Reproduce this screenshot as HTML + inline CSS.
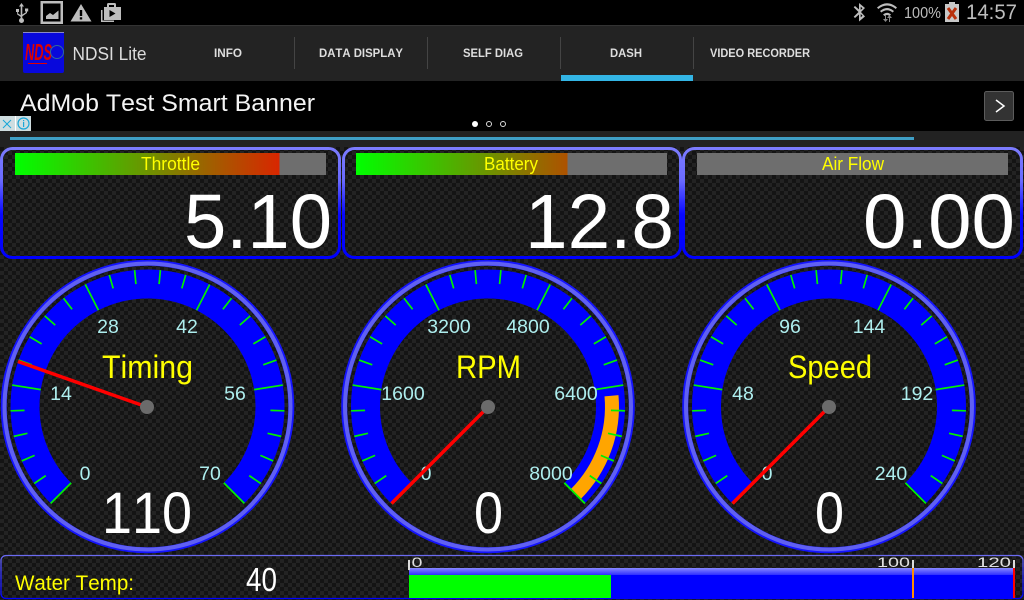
<!DOCTYPE html>
<html><head><meta charset="utf-8"><title>NDSI Lite</title>
<style>
html,body{margin:0;padding:0;background:#000;width:1024px;height:600px;overflow:hidden}
#bg{position:absolute;left:0;top:131px;width:1024px;height:469px;background:conic-gradient(#232323 25%,#141414 0 50%,#232323 0 75%,#141414 0) 0 0/8px 8px}
svg{position:absolute;left:0;top:0;font-family:"Liberation Sans",sans-serif;font-kerning:none}
</style></head><body>
<div id="bg"></div>
<svg width="1024" height="600" viewBox="0 0 1024 600" xmlns="http://www.w3.org/2000/svg">
<defs>
<linearGradient id="pb" gradientUnits="userSpaceOnUse" x1="0" y1="147" x2="0" y2="259"><stop offset="0" stop-color="#7c7cff"/><stop offset=".3" stop-color="#6a6aff"/><stop offset=".6" stop-color="#0808ff"/><stop offset="1" stop-color="#0000ff"/></linearGradient>
<linearGradient id="bb" gradientUnits="userSpaceOnUse" x1="0" y1="555" x2="0" y2="599"><stop offset="0" stop-color="#6c6cf0"/><stop offset=".5" stop-color="#2a2aff"/><stop offset="1" stop-color="#0000ff"/></linearGradient>
<linearGradient id="st" gradientUnits="userSpaceOnUse" x1="0" y1="568" x2="0" y2="576"><stop offset="0" stop-color="#8888ff"/><stop offset="1" stop-color="#2222ff"/></linearGradient>
<linearGradient id="g1" gradientUnits="userSpaceOnUse" x1="15" y1="0" x2="326" y2="0"><stop offset="0" stop-color="#00ff00"/><stop offset="1" stop-color="#ff0000"/></linearGradient>
<linearGradient id="g2" gradientUnits="userSpaceOnUse" x1="356" y1="0" x2="667" y2="0"><stop offset="0" stop-color="#00ff00"/><stop offset="1" stop-color="#ff0000"/></linearGradient>
<g id="dial">
<circle r="143.800" fill="none" stroke="#1414ff" stroke-width="6"/>
<circle r="143" fill="none" stroke="#6060f2" stroke-width="4"/>
<path d="M-86.62 86.62A122.5 122.5 0 1 1 86.62 86.62" fill="none" stroke="#0000ff" stroke-width="29"/>
<g stroke="#00f000" stroke-width="1.700">
<line y1="-137" y2="-108" transform="rotate(-135)"/>
<line y1="-137" y2="-123" transform="rotate(-124.2)"/>
<line y1="-137" y2="-123" transform="rotate(-113.4)"/>
<line y1="-137" y2="-123" transform="rotate(-102.6)"/>
<line y1="-137" y2="-123" transform="rotate(-91.8)"/>
<line y1="-137" y2="-108" transform="rotate(-81)"/>
<line y1="-137" y2="-123" transform="rotate(-70.2)"/>
<line y1="-137" y2="-123" transform="rotate(-59.4)"/>
<line y1="-137" y2="-123" transform="rotate(-48.6)"/>
<line y1="-137" y2="-123" transform="rotate(-37.8)"/>
<line y1="-137" y2="-108" transform="rotate(-27)"/>
<line y1="-137" y2="-123" transform="rotate(-16.2)"/>
<line y1="-137" y2="-123" transform="rotate(-5.4)"/>
<line y1="-137" y2="-123" transform="rotate(5.4)"/>
<line y1="-137" y2="-123" transform="rotate(16.2)"/>
<line y1="-137" y2="-108" transform="rotate(27)"/>
<line y1="-137" y2="-123" transform="rotate(37.8)"/>
<line y1="-137" y2="-123" transform="rotate(48.6)"/>
<line y1="-137" y2="-123" transform="rotate(59.4)"/>
<line y1="-137" y2="-123" transform="rotate(70.2)"/>
<line y1="-137" y2="-108" transform="rotate(81)"/>
<line y1="-137" y2="-123" transform="rotate(91.8)"/>
<line y1="-137" y2="-123" transform="rotate(102.6)"/>
<line y1="-137" y2="-123" transform="rotate(113.4)"/>
<line y1="-137" y2="-123" transform="rotate(124.2)"/>
<line y1="-137" y2="-108" transform="rotate(135)"/>
</g>
</g>
</defs>

<!-- status bar -->
<rect width="1024" height="25" fill="#000"/>
<g fill="#bdbdbd" stroke="none">
<path d="M21.5 3l2.5 3.5h-1.700V18.500h-1.600V6.500H19z"/><circle cx="21.5" cy="20.5" r="2.500"/>
<path d="M16 9h3v3h-.9v1.500l3 2v1.600l-3.900-2.600V12H16zM25 8.500h3.200v3H27v1.500l-5 3.500v-1.700l3.900-2.600V11.500H25z"/>
<path d="M40.500 1h22.500v23H40.500zM43 3.500v18h17.500v-18z" fill-rule="evenodd"/>
<path d="M46 19v-3l4-3 3 2 5.500-4.500V19z"/>
<path d="M81 4l10.500 17.500h-21zM79.800 10v6h2.400v-6zM79.800 17.300v2.200h2.400v-2.200z" fill-rule="evenodd"/>
<path d="M107 7V4.500Q107 3 108.500 3h6Q116 3 116 4.500V7h5v13h-17V7zM109 7h5V5h-5zM109.500 10v7l6-3.500z" fill-rule="evenodd"/>
<path d="M101 10h1.500v10.500H114V22h-13z"/>
<path d="M859 3l6 5-4 4 4 4.500-6 5v-7l-4 3.500-1.300-1.300 4.800-4.700-4.800-4.700L855 6l4 3.500zM860.700 6.700v3.300l1.800-1.700zM860.700 14v3.300l1.800-1.600z" fill-rule="evenodd"/>
<path d="M877 7.500Q887 -1 897 7.500l-1.300 1.500Q887 2 878.300 9zM880 11Q887 5 894 11l-1.300 1.500Q887 8 881.300 12.500zM883 14.500Q887 11 891 14.500l-1.500 1.500Q887 14 884.500 16z"/>
<path d="M885 15v4h-2l2.500 3 2.500-3h-2v-4zM890 22v-4h2l-2.500-3-2.500 3h2v4z" fill="#888"/>
<rect x="945" y="4" width="14" height="18" fill="#c8c8c8"/><rect x="949" y="2" width="6" height="2" fill="#c8c8c8"/>
</g>
<path d="M948 8l8 11M956 8l-8 11" stroke="#b8300c" stroke-width="3"/>
<text x="904" y="18" font-size="15.500" fill="#bdbdbd" textLength="37" lengthAdjust="spacingAndGlyphs">100%</text>
<text x="966" y="19" font-size="21" fill="#bdbdbd" textLength="51" lengthAdjust="spacingAndGlyphs">14:57</text>

<!-- action bar -->
<rect y="25" width="1024" height="56" fill="#232323"/>
<rect y="25" width="1024" height="1" fill="#333"/>
<rect x="23" y="32" width="41" height="41" rx="2" fill="#0808dc"/>
<rect x="23" y="32" width="41" height="1" fill="#8a8ac8"/>
<text x="25" y="60" font-size="23" font-weight="bold" font-style="italic" fill="#e00000" textLength="27" lengthAdjust="spacingAndGlyphs">NDS</text>
<line x1="28" y1="63.500" x2="47" y2="63.500" stroke="#e00000"/>
<circle cx="57" cy="52" r="6.500" fill="none" stroke="#2f6a98" stroke-width="1"/>
<text x="72.500" y="60" font-size="18" fill="#dcdcdc" textLength="74" lengthAdjust="spacingAndGlyphs">NDSI Lite</text>
<g fill="#444"><rect x="294" y="37" width="1" height="32"/><rect x="427" y="37" width="1" height="32"/><rect x="560" y="37" width="1" height="32"/><rect x="693" y="37" width="1" height="32"/></g>
<g font-size="11.500" font-weight="bold" fill="#dedede">
<text x="214" y="57" textLength="28" lengthAdjust="spacingAndGlyphs">INFO</text>
<text x="319" y="57" textLength="84" lengthAdjust="spacingAndGlyphs">DATA DISPLAY</text>
<text x="463" y="57" textLength="60" lengthAdjust="spacingAndGlyphs">SELF DIAG</text>
<text x="610" y="57" textLength="32" lengthAdjust="spacingAndGlyphs">DASH</text>
<text x="710" y="57" textLength="100" lengthAdjust="spacingAndGlyphs">VIDEO RECORDER</text>
</g>
<rect x="561" y="75" width="132" height="6" fill="#33b5e5"/>

<!-- ad -->
<rect y="81" width="1024" height="50" fill="#000"/>
<text x="20" y="111" font-size="24" fill="#f4f4f4" textLength="295" lengthAdjust="spacingAndGlyphs">AdMob Test Smart Banner</text>
<rect x="0" y="116" width="31" height="15" fill="#cfdde0"/>
<rect x="15" y="116" width="1" height="15" fill="#fff"/>
<path d="M3 120l8 8M11 120l-8 8" stroke="#1aa7d8" stroke-width="1"/>
<circle cx="23.500" cy="123.500" r="5.500" fill="none" stroke="#1aa7d8" stroke-width="1.200"/>
<rect x="23" y="122" width="1.200" height="5" fill="#1aa7d8"/><rect x="23" y="120" width="1.200" height="1.200" fill="#1aa7d8"/>
<rect x="984.500" y="91.500" width="29" height="29" rx="2" fill="#333" stroke="#5c5c5c"/>
<path d="M996 100l8 6-8 6" fill="none" stroke="#fff" stroke-width="1.500"/>
<circle cx="475" cy="124" r="3" fill="#fff"/>
<circle cx="489" cy="124" r="2.500" fill="none" stroke="#ddd" stroke-width="1"/>
<circle cx="503" cy="124" r="2.500" fill="none" stroke="#ddd" stroke-width="1"/>

<!-- strip -->
<rect y="131" width="1024" height="16" fill="#222"/>
<rect x="10" y="137" width="904" height="3" fill="#3f9fc6"/>

<!-- top panels -->
<g fill="none" stroke="url(#pb)" stroke-width="3">
<rect x="1.500" y="148.500" width="338" height="109" rx="11"/>
<rect x="343.500" y="148.500" width="337" height="109" rx="11"/>
<rect x="683.500" y="148.500" width="338" height="109" rx="11"/>
</g>
<rect x="15" y="153" width="311" height="22" fill="#6e6e6e"/>
<rect x="15" y="153" width="264.500" height="22" fill="url(#g1)"/>
<rect x="356" y="153" width="311" height="22" fill="#6e6e6e"/>
<rect x="356" y="153" width="211.500" height="22" fill="url(#g2)"/>
<rect x="697" y="153" width="311" height="22" fill="#6e6e6e"/>
<g font-size="18" fill="#ffff00">
<text x="141" y="170" textLength="59" lengthAdjust="spacingAndGlyphs">Throttle</text>
<text x="484" y="170" textLength="54" lengthAdjust="spacingAndGlyphs">Battery</text>
<text x="822" y="170" textLength="62" lengthAdjust="spacingAndGlyphs">Air Flow</text>
</g>
<g font-size="77" fill="#fff">
<text x="184" y="248" textLength="148" lengthAdjust="spacingAndGlyphs">5.10</text>
<text x="525" y="248" textLength="149" lengthAdjust="spacingAndGlyphs">12.8</text>
<text x="863" y="248" textLength="152" lengthAdjust="spacingAndGlyphs">0.00</text>
</g>

<!-- gauges -->
<use href="#dial" transform="translate(147.500 406.500)"/>
<use href="#dial" transform="translate(488 406.500)"/>
<use href="#dial" transform="translate(829 406.500)"/>
<path d="M611.500 395.700A124 124 0 0 1 575.700 494.200" fill="none" stroke="#ffa500" stroke-width="14"/>
<g stroke="#00f000" stroke-width="1.700" transform="translate(488 406.500)">
<line y1="-137" y2="-123" transform="rotate(91.8)"/>
<line y1="-137" y2="-123" transform="rotate(102.6)"/>
<line y1="-137" y2="-123" transform="rotate(113.4)"/>
<line y1="-137" y2="-123" transform="rotate(124.2)"/>
<line y1="-137" y2="-108" transform="rotate(135)"/>
</g>

<g font-size="19.500" fill="#aeeeee" text-anchor="middle">
<text x="85" y="480">0</text><text x="61" y="400">14</text><text x="108" y="333">28</text><text x="187" y="333">42</text><text x="235" y="400">56</text><text x="210" y="480">70</text>
<text x="426" y="480">0</text><text x="403" y="400">1600</text><text x="449" y="333">3200</text><text x="528" y="333">4800</text><text x="576" y="400">6400</text><text x="551" y="480">8000</text>
<text x="767" y="480">0</text><text x="743" y="400">48</text><text x="790" y="333">96</text><text x="869" y="333">144</text><text x="917" y="400">192</text><text x="891" y="480">240</text>
</g>
<g font-size="32" fill="#ffff00">
<text x="102" y="378" textLength="91" lengthAdjust="spacingAndGlyphs">Timing</text>
<text x="456" y="378" textLength="65" lengthAdjust="spacingAndGlyphs">RPM</text>
<text x="788" y="378" textLength="84" lengthAdjust="spacingAndGlyphs">Speed</text>
</g>
<g font-size="58" fill="#fff">
<text x="102" y="533" textLength="90" lengthAdjust="spacingAndGlyphs">110</text>
<text x="474" y="533" textLength="29" lengthAdjust="spacingAndGlyphs">0</text>
<text x="815" y="533" textLength="29" lengthAdjust="spacingAndGlyphs">0</text>
</g>
<g stroke="#ff0000" stroke-width="3.500">
<line x1="147" y1="407" x2="18" y2="361.500"/>
<line x1="488" y1="407" x2="391.500" y2="503.500"/>
<line x1="829" y1="407" x2="732.500" y2="503.500"/>
</g>
<g fill="#6b6b6b"><circle cx="147" cy="407" r="7"/><circle cx="488" cy="407" r="7"/><circle cx="829" cy="407" r="7"/></g>

<!-- bottom panel -->
<rect x="1" y="555.500" width="1022" height="43" rx="5" fill="none" stroke="url(#bb)" stroke-width="1.300"/>
<text x="15" y="590" font-size="21.500" fill="#ffff00" textLength="119" lengthAdjust="spacingAndGlyphs">Water Temp:</text>
<text x="246" y="591" font-size="33" fill="#fff" textLength="31" lengthAdjust="spacingAndGlyphs">40</text>
<rect x="409" y="568" width="606" height="30" fill="#0000ff"/>
<rect x="409" y="568" width="606" height="7" fill="url(#st)"/>
<rect x="409" y="575" width="202" height="23" fill="#00ff00"/>
<rect x="408" y="560" width="2" height="10" fill="#ddd"/>
<rect x="912" y="560" width="2" height="9" fill="#ddd"/>
<rect x="912" y="568" width="2" height="30" fill="#ff8c00"/>
<rect x="1013" y="560" width="2" height="9" fill="#ddd"/>
<rect x="1013" y="568" width="2" height="30" fill="#ff0000"/>
<g font-size="14" fill="#e0e0e0">
<text x="411.500" y="567" textLength="11" lengthAdjust="spacingAndGlyphs">0</text>
<text x="877" y="567" textLength="33" lengthAdjust="spacingAndGlyphs">100</text>
<text x="977" y="567" textLength="34" lengthAdjust="spacingAndGlyphs">120</text>
</g>
</svg>
</body></html>
